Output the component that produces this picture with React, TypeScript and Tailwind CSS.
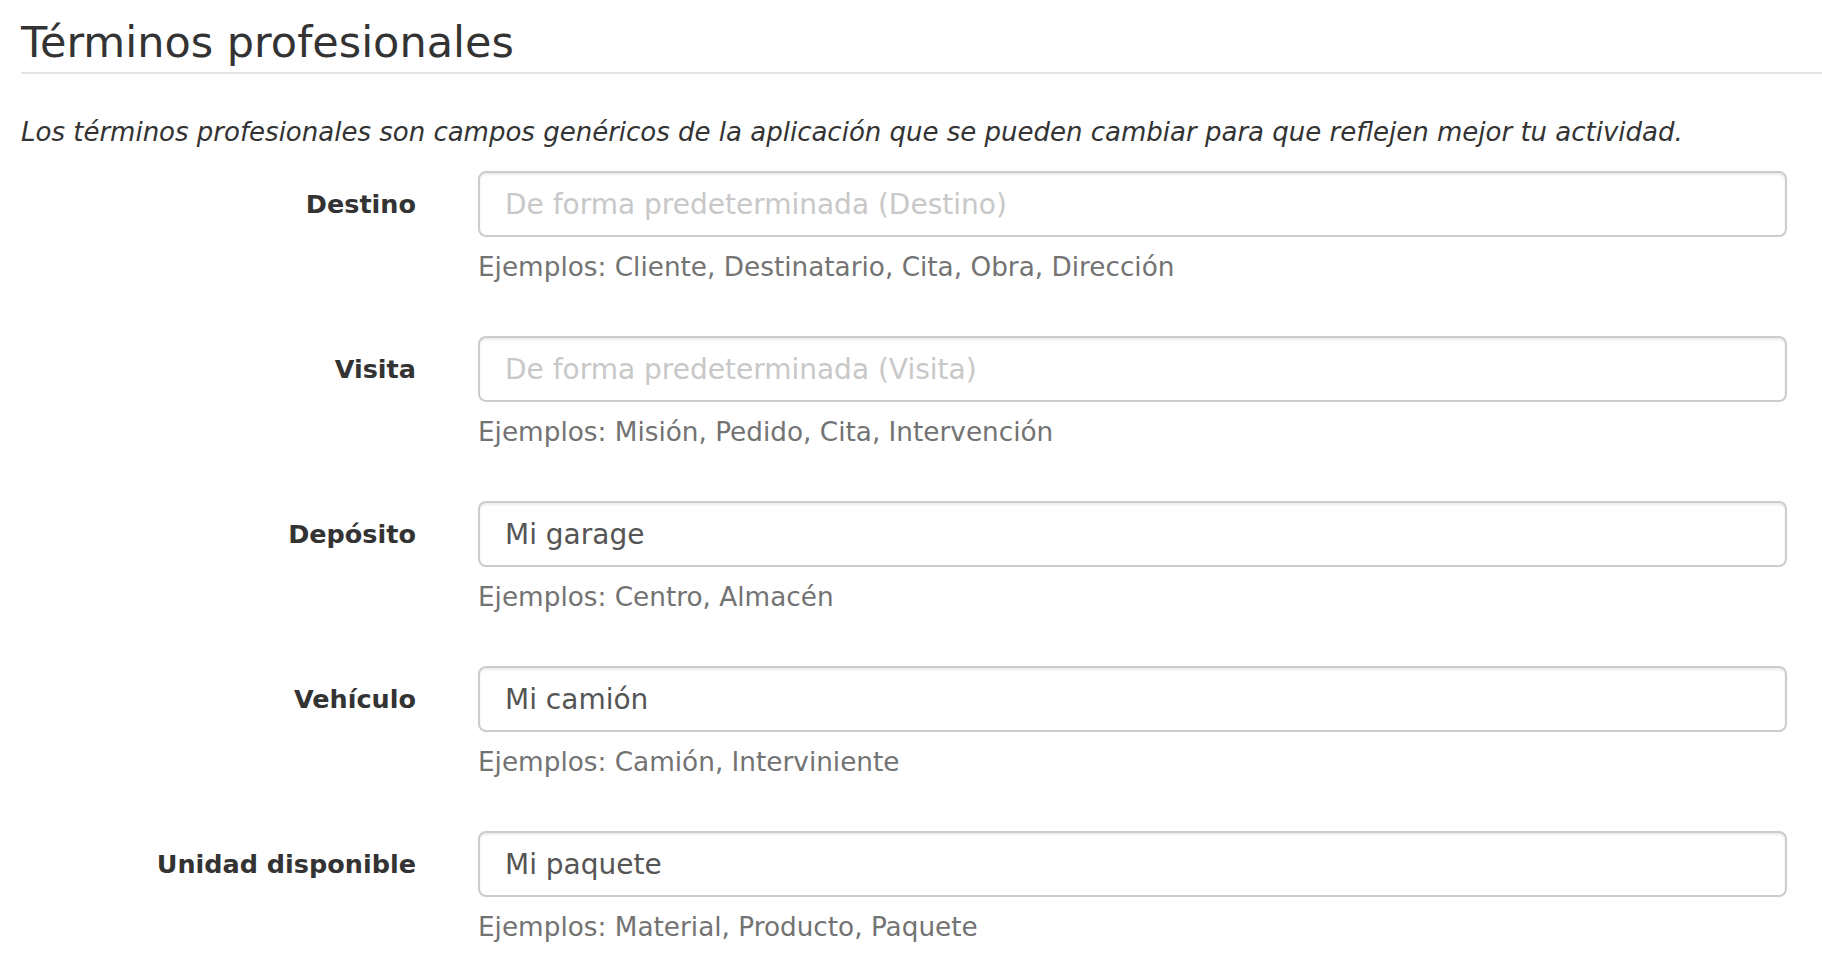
import React from 'react';

interface TermRowProps {
	label: string;
	value?: string;
	placeholder: string;
	examples: string;
}

const terms: TermRowProps[] = [
	{ label: 'Destino', placeholder: 'De forma predeterminada (Destino)', examples: 'Ejemplos: Cliente, Destinatario, Cita, Obra, Dirección' },
	{ label: 'Visita', placeholder: 'De forma predeterminada (Visita)', examples: 'Ejemplos: Misión, Pedido, Cita, Intervención' },
	{ label: 'Depósito', value: 'Mi garage', placeholder: 'De forma predeterminada (Depósito)', examples: 'Ejemplos: Centro, Almacén' },
	{ label: 'Vehículo', value: 'Mi camión', placeholder: 'De forma predeterminada (Vehículo)', examples: 'Ejemplos: Camión, Interviniente' },
	{ label: 'Unidad disponible', value: 'Mi paquete', placeholder: 'De forma predeterminada (Unidad disponible)', examples: 'Ejemplos: Material, Producto, Paquete' },
];

const TermRow = ({ label, value, placeholder, examples }: TermRowProps) => (
	<div className="flex gap-[62px] mb-[51px]">
		<label className="w-[395px] shrink-0 h-[66px] flex items-center justify-end text-[25.5px] font-bold text-[#333]">
			{label}
		</label>
		<div className="flex-1">
			<input
				type="text"
				defaultValue={value}
				placeholder={placeholder}
				className="w-full h-[66px] px-[25px] text-[28px] text-[#555] bg-white border-2 border-[#ccc] rounded-[8px] shadow-[inset_0_2px_2px_rgba(0,0,0,0.075)] outline-none placeholder:text-[#c8c8c8]"
			/>
			<p className="mt-[12px] text-[26.3px] leading-[36px] text-[#737373]">{examples}</p>
		</div>
	</div>
);

export default function App() {
	return (
		<div className="bg-white min-h-screen pl-[21px] font-['DejaVu_Sans',Verdana,sans-serif] text-[#333]">
			<h1 className="pt-[17px] pb-[5px] text-[43px] leading-[50px] font-normal border-b-2 border-[#e5e5e5]">
				Términos profesionales
			</h1>
			<p className="mt-[40px] text-[26px] leading-[36px] italic">
				Los términos profesionales son campos genéricos de la aplicación que se pueden cambiar para que reflejen mejor tu actividad.
			</p>
			<form className="mt-[21px] pr-[35px]">
				{terms.map((t) => (
					<TermRow key={t.label} {...t} />
				))}
			</form>
		</div>
	);
}
